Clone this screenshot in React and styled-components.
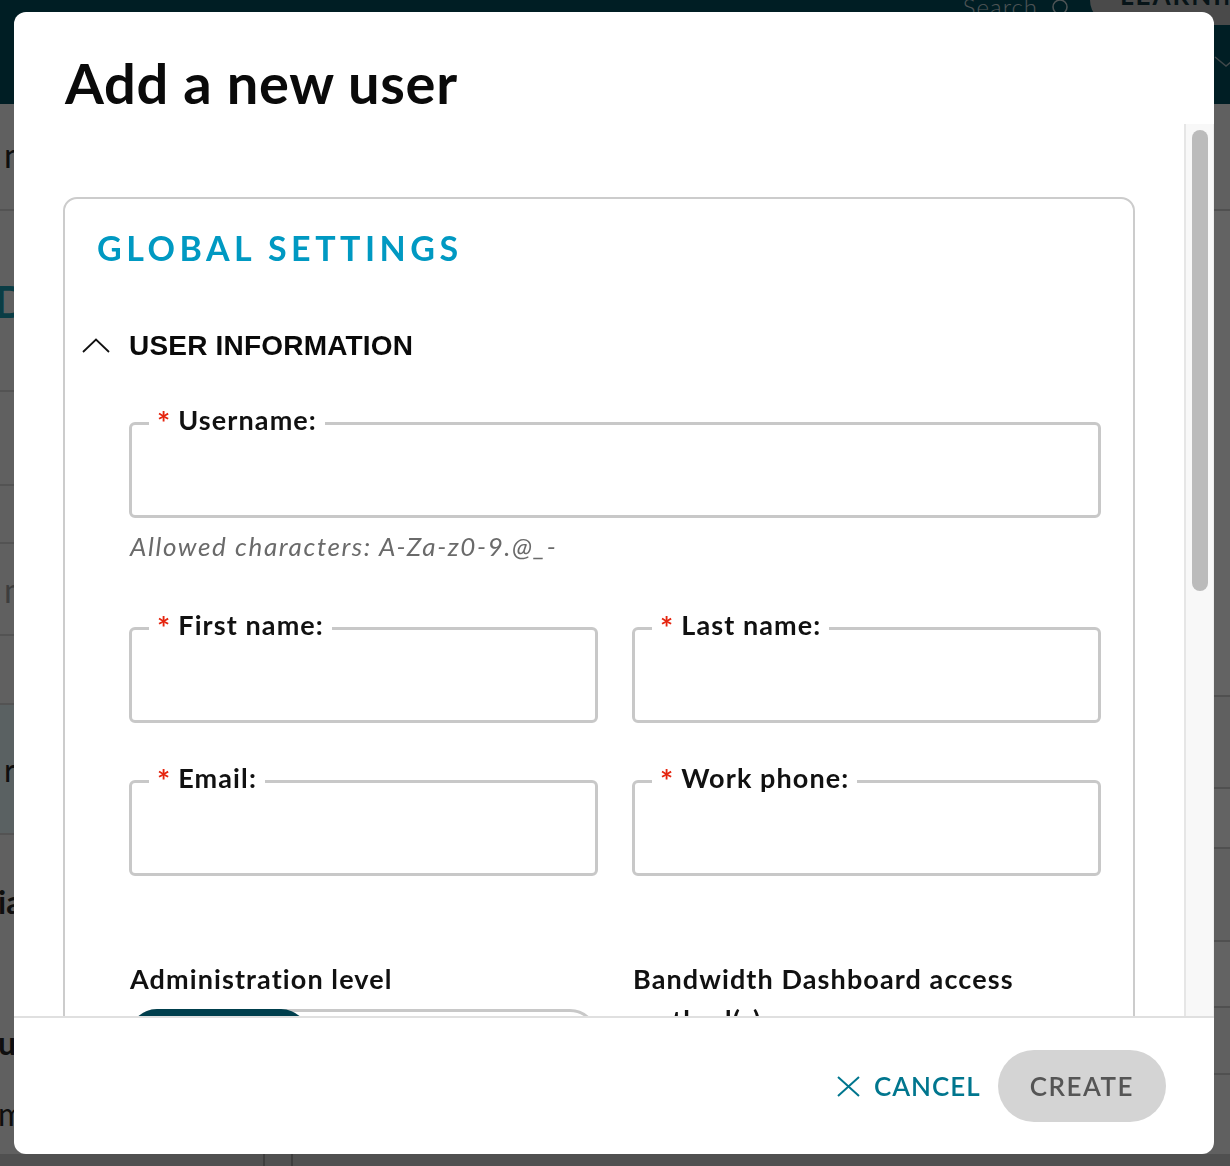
import React from "react";
import styled, { createGlobalStyle } from "styled-components";

const GlobalStyle = createGlobalStyle`
  html, body {
    margin: 0;
    padding: 0;
  }
  body {
    font-family: Lato, "Open Sans", sans-serif;
    background: #f0f0f0;
  }
  * {
    box-sizing: border-box;
  }
`;

// ---- page behind the dialog ----

const Page = styled.div`
  height: 1166px;
  display: flex;
  flex-direction: column;
  overflow: hidden;
  background: #f0f0f0;
`;

const TopBar = styled.header`
  flex: none;
  height: 104px;
  background: #004b5a;
  display: flex;
  flex-direction: column;
`;

const TopBarRow = styled.div`
  display: flex;
  justify-content: flex-end;
  align-items: flex-start;
  gap: 22px;
  height: 40px;
`;

const SearchBox = styled.div`
  display: flex;
  align-items: center;
  gap: 14px;
  margin-top: -8px;
  color: #c4d2d5;
  font: 300 24px/29px Lato, sans-serif;
  letter-spacing: 1px;
`;

const LearnPill = styled.div`
  width: 200px;
  height: 50px;
  margin-top: -25px;
  margin-right: -60px;
  padding: 0 0 10px 30px;
  border-radius: 25px;
  background: #b9b9b9;
  color: #12343c;
  display: flex;
  align-items: center;
  font: 700 26px Lato, sans-serif;
  letter-spacing: 2px;
`;

const MenuRow = styled.div`
  display: flex;
  justify-content: flex-end;
  margin-top: 16px;
  margin-right: -8px;
`;

const Content = styled.div`
  flex: 1;
  min-height: 0;
  display: grid;
  grid-template-columns: 280px 1fr;
`;

const SideList = styled.div`
  display: flex;
  flex-direction: column;
`;

const SideItem = styled.div`
  flex: none;
  height: ${(p) => p.$h}px;
  border-bottom: 2px solid #cfcfcf;
  background: ${(p) => (p.$active ? "#e0f3f6" : "transparent")};
  display: flex;
  align-items: ${(p) => (p.$top ? "flex-start" : "center")};
  padding-top: ${(p) => (p.$top ? "30px" : "0")};
  padding-left: 4px;
  text-indent: ${(p) => p.$indent || 0}px;
  color: ${(p) => p.$color || "#262626"};
  font: ${(p) => p.$weight || 400} ${(p) => p.$size || 34}px Lato, sans-serif;
`;

const SideRest = styled.div`
  flex: 1;
  display: flex;
  flex-direction: column;
  padding-top: 48px;
  margin-left: -2px;
  color: #262626;
`;

const SideText = styled.span`
  margin-top: ${(p) => p.$gap || 0}px;
  font: ${(p) => p.$weight || 700} 32px/38px Lato, sans-serif;
`;

const MainList = styled.div`
  display: flex;
  flex-direction: column;
`;

const MainRow = styled.div`
  flex: none;
  height: ${(p) => p.$h}px;
  border-bottom: 2px solid #c8c8c8;
  background: ${(p) => (p.$shade ? "#f7f7f7" : "transparent")};
`;

const BottomBar = styled.div`
  flex: none;
  height: 12px;
  background: #c8c8c8;
  display: grid;
  grid-template-columns: 263px 28px 1fr;
`;

const BottomCell = styled.div`
  border-left: ${(p) => (p.$line ? "2px solid #989898" : "0")};
`;

// ---- dialog ----

const Backdrop = styled.div`
  position: fixed;
  inset: 0;
  background: rgba(0, 0, 0, 0.6);
  padding: 12px 16px 12px 14px;
  display: flex;
`;

const Modal = styled.div`
  width: 1200px;
  height: 1142px;
  background: #fff;
  border-radius: 12px;
  overflow: hidden;
  display: flex;
  flex-direction: column;
`;

const ModalHeader = styled.div`
  flex: none;
  padding: 37px 51px 8px;
`;

const Title = styled.h1`
  margin: 0;
  font: 700 56px/1.2 Lato, sans-serif;
  letter-spacing: 0.7px;
  color: #0a0a0a;
`;

const Body = styled.div`
  flex: 1;
  min-height: 0;
  display: flex;
`;

const Scroller = styled.div`
  flex: 1;
  overflow: hidden;
  padding: 73px 49px 0;
`;

const ScrollTrack = styled.div`
  flex: none;
  width: 30px;
  background: #f8f8f8;
  border-left: 2px solid #e6e6e6;
  border-right: 1px solid #eeeeee;
  padding: 6px 5px 0 6px;
`;

const ScrollThumb = styled.div`
  height: 461px;
  border-radius: 8px;
  background: #bbbbbb;
`;

const Card = styled.section`
  border: 2px solid #cccccc;
  border-radius: 14px;
  padding: 29px 32px 48px 17px;
`;

const CardTitle = styled.h2`
  margin: 0 0 0 15px;
  font: 700 34px/1.2 Lato, sans-serif;
  letter-spacing: 4.5px;
  color: #0099c2;
  text-transform: uppercase;
`;

const SectionHeader = styled.button`
  margin-top: 61px;
  padding: 0;
  border: 0;
  background: none;
  display: flex;
  align-items: center;
  gap: 19px;
  cursor: pointer;
`;

const SectionTitle = styled.span`
  font: 700 28px/32px "Liberation Sans", Arial, sans-serif;
  letter-spacing: 0.2px;
  color: #0a0a0a;
  text-transform: uppercase;
`;

const Fields = styled.div`
  padding-left: 47px;
  margin-top: 41px;
`;

const Field = styled.fieldset`
  margin: 0;
  padding: 0;
  min-width: 0;
  border: 3px solid #c8c8c8;
  border-radius: 6px;
`;

const Legend = styled.legend`
  margin-left: 17px;
  padding: 0 8px 10px;
  font: 700 27px/31px Lato, sans-serif;
  color: #111;
  letter-spacing: 1.1px;
`;

const Required = styled.span`
  display: inline-block;
  color: #e5250f;
  font-size: 31px;
  margin-right: 7px;
  transform: translateY(4px);
`;

const Input = styled.input`
  display: block;
  width: 100%;
  height: 70px;
  border: 0;
  outline: none;
  background: transparent;
  padding: 0 24px;
  font: 400 24px Lato, sans-serif;
`;

const Hint = styled.p`
  margin: 13px 0 0 1px;
  font: italic 400 26px/30px Lato, sans-serif;
  color: #6a6a6a;
  letter-spacing: 1.6px;
`;

const FieldGrid = styled.div`
  display: grid;
  grid-template-columns: 1fr 1fr;
  column-gap: 34px;
  row-gap: 38px;
  margin-top: ${(p) => p.$top}px;
`;

const GroupLabel = styled.div`
  font: 700 27px/41px Lato, sans-serif;
  color: #111;
  letter-spacing: 1.1px;
  padding-left: 1px;
`;

const Toggle = styled.div`
  margin-top: 10px;
  height: 56px;
  display: flex;
  border: 3px solid #c8c8c8;
  border-radius: 28px;
`;

const ToggleOption = styled.button`
  flex: ${(p) => (p.$active ? "0 0 180px" : "1")};
  margin: ${(p) => (p.$active ? "-3px 0 -3px -3px" : "0")};
  border: 0;
  border-radius: 28px;
  background: ${(p) => (p.$active ? "#003f4d" : "transparent")};
  color: ${(p) => (p.$active ? "#fff" : "#333")};
  font: 700 22px Lato, sans-serif;
  letter-spacing: 1px;
`;

const Footer = styled.footer`
  flex: none;
  height: 138px;
  border-top: 2px solid #e0e0e0;
  display: flex;
  align-items: center;
  justify-content: flex-end;
  gap: 17px;
  padding-right: 48px;
`;

const CancelButton = styled.button`
  display: flex;
  align-items: center;
  gap: 14px;
  padding: 0;
  border: 0;
  background: none;
  color: #00768e;
  font: 600 26px Lato, sans-serif;
  letter-spacing: 1px;
  text-transform: uppercase;
  cursor: pointer;
`;

const CreateButton = styled.button`
  height: 72px;
  padding: 0 32px;
  border: 0;
  border-radius: 36px;
  background: #d4d4d4;
  color: #555;
  font: 600 26px Lato, sans-serif;
  letter-spacing: 1.5px;
  text-transform: uppercase;
`;

const sideRows = [
  { h: 107, text: "nodes", top: true },
  { h: 181, text: "Devices", color: "#1b9aad", size: 44, weight: 700, indent: -10 },
  { h: 94 },
  { h: 58 },
  { h: 92, text: "members", color: "#9a9a9a" },
  { h: 69 },
  { h: 130, text: "rrors", active: true, size: 32 },
];

const mainRows = [107, 486, 92, 60, 93, 66, 67];

const ChevronUp = () => (
  <svg width="28" height="15" viewBox="0 0 28 15" fill="none">
    <polyline points="1,14 14,1.5 27,14" stroke="#111" strokeWidth="1.8" />
  </svg>
);

const CloseIcon = () => (
  <svg width="23" height="21" viewBox="0 0 23 21" fill="none">
    <path d="M1 1L22 20M22 1L1 20" stroke="currentColor" strokeWidth="2" />
  </svg>
);

const TextField = ({ label }) => (
  <Field>
    <Legend>
      <Required>*</Required>
      {label}
    </Legend>
    <Input type="text" />
  </Field>
);

const BackgroundPage = () => (
  <Page>
    <TopBar>
      <TopBarRow>
        <SearchBox>
          Search
          <svg width="16" height="16" viewBox="0 0 16 16" fill="none">
            <circle cx="8" cy="8" r="7" stroke="#c4d2d5" strokeWidth="1.5" />
          </svg>
        </SearchBox>
        <LearnPill>LEARNING</LearnPill>
      </TopBarRow>
      <MenuRow>
        <svg width="24" height="12" viewBox="0 0 24 12" fill="none">
          <polyline points="1,1 12,10 23,1" stroke="#9fb3b8" strokeWidth="1.5" />
        </svg>
      </MenuRow>
    </TopBar>
    <Content>
      <SideList>
        {sideRows.map((r, i) => (
          <SideItem
            key={i}
            $h={r.h}
            $top={r.top}
            $active={r.active}
            $color={r.color}
            $size={r.size}
            $weight={r.weight}
            $indent={r.indent}
          >
            {r.text}
          </SideItem>
        ))}
        <SideRest>
          <SideText>ia</SideText>
          <SideText $gap={103}>ul</SideText>
          <SideText $gap={33} $weight={400}>m</SideText>
        </SideRest>
      </SideList>
      <MainList>
        {mainRows.map((h, i) => (
          <MainRow key={i} $h={h} $shade={i % 2 === 1} />
        ))}
      </MainList>
    </Content>
    <BottomBar>
      <BottomCell />
      <BottomCell $line />
      <BottomCell $line />
    </BottomBar>
  </Page>
);

export default function App() {
  return (
    <>
      <GlobalStyle />
      <BackgroundPage />
      <Backdrop>
        <Modal role="dialog" aria-modal="true">
          <ModalHeader>
            <Title>Add a new user</Title>
          </ModalHeader>
          <Body>
            <Scroller>
              <Card>
                <CardTitle>Global settings</CardTitle>
                <SectionHeader>
                  <ChevronUp />
                  <SectionTitle>User information</SectionTitle>
                </SectionHeader>
                <Fields>
                  <TextField label="Username:" />
                  <Hint>Allowed characters: A-Za-z0-9.@_-</Hint>
                  <FieldGrid $top={47}>
                    <TextField label="First name:" />
                    <TextField label="Last name:" />
                    <TextField label="Email:" />
                    <TextField label="Work phone:" />
                  </FieldGrid>
                  <FieldGrid $top={82}>
                    <div>
                      <GroupLabel>Administration level</GroupLabel>
                      <Toggle>
                        <ToggleOption $active>USER</ToggleOption>
                        <ToggleOption>ADMIN</ToggleOption>
                      </Toggle>
                    </div>
                    <div>
                      <GroupLabel>Bandwidth Dashboard access method(s)</GroupLabel>
                    </div>
                  </FieldGrid>
                </Fields>
              </Card>
            </Scroller>
            <ScrollTrack>
              <ScrollThumb />
            </ScrollTrack>
          </Body>
          <Footer>
            <CancelButton>
              <CloseIcon />
              Cancel
            </CancelButton>
            <CreateButton disabled>Create</CreateButton>
          </Footer>
        </Modal>
      </Backdrop>
    </>
  );
}
